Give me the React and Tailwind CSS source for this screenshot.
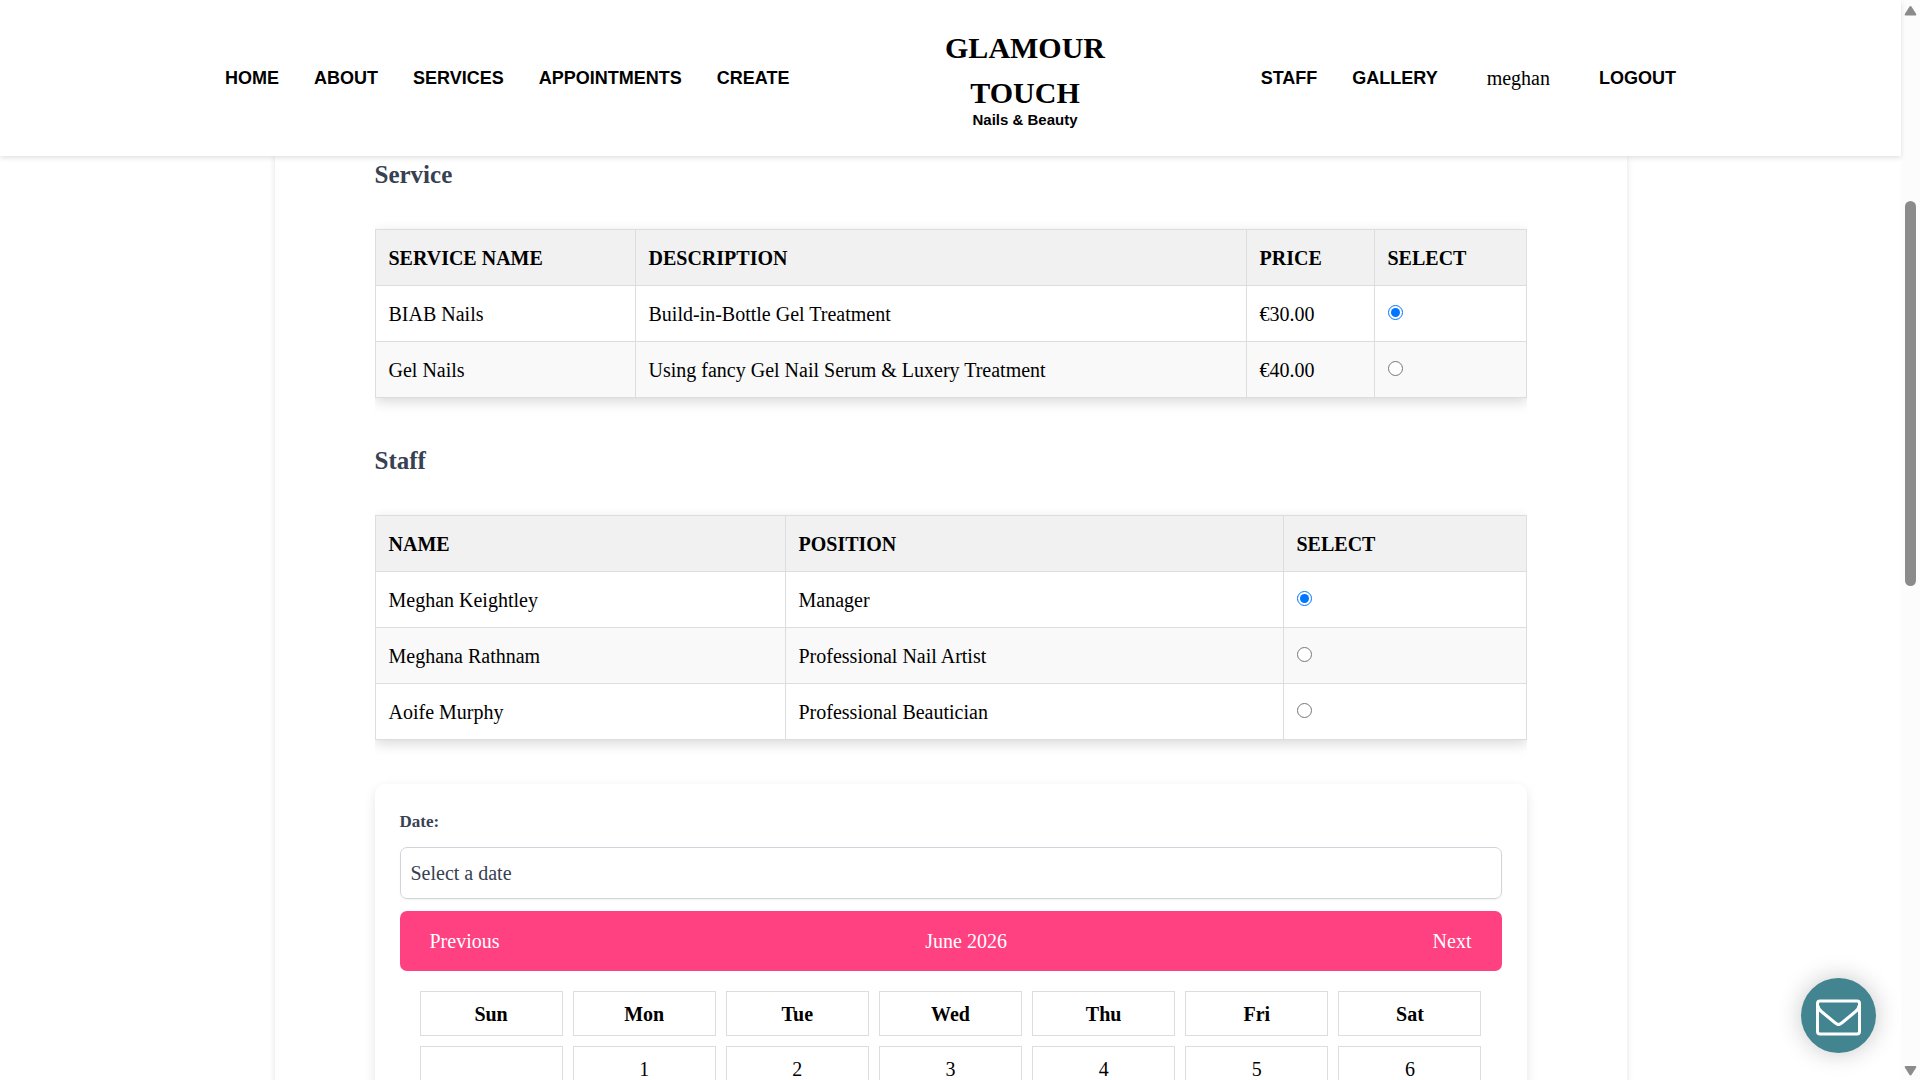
import { useState } from "react";

const leftLinks = ["Home", "About", "Services", "Appointments", "Create"];

const services = [
  { id: 1, name: "BIAB Nails", description: "Build-in-Bottle Gel Treatment", price: 30 },
  { id: 2, name: "Gel Nails", description: "Using fancy Gel Nail Serum & Luxery Treatment", price: 40 },
];

const staff = [
  { id: 1, name: "Meghan Keightley", position: "Manager" },
  { id: 2, name: "Meghana Rathnam", position: "Professional Nail Artist" },
  { id: 3, name: "Aoife Murphy", position: "Professional Beautician" },
];

const weekDays = ["Sun", "Mon", "Tue", "Wed", "Thu", "Fri", "Sat"];

const NavLink = ({ children }) => (
  <a href="#" className="font-['Liberation_Sans',sans-serif] text-[18px] font-bold uppercase hover:text-[#ff4081]">
    {children}
  </a>
);

const Header = () => (
  <header className="relative z-10 flex h-[156px] shrink-0 items-center justify-between bg-white px-[225px] shadow-[0_2px_5px_rgba(0,0,0,0.12)]">
    <nav className="flex items-center gap-[35px]">
      {leftLinks.map((link) => (
        <NavLink key={link}>{link}</NavLink>
      ))}
    </nav>

    <div className="w-[160px] pb-[5px] text-center font-bold">
      <h1 className="text-[30px] leading-[45px]">GLAMOUR TOUCH</h1>
      <p className="-mt-[3px] font-['Liberation_Sans',sans-serif] text-[15px] leading-[15px]">Nails &amp; Beauty</p>
    </div>

    <nav className="flex items-center gap-[35px]">
      <NavLink>Staff</NavLink>
      <NavLink>Gallery</NavLink>
      <span className="px-3.5 text-[20px]">meghan</span>
      <NavLink>Logout</NavLink>
    </nav>
  </header>
);

const Th = ({ children, className = "" }) => (
  <th className={`border border-[#ddd] px-[13px] text-left font-bold uppercase ${className}`}>{children}</th>
);

const Td = ({ children }) => <td className="border border-[#ddd] px-[13px]">{children}</td>;

const RadioCell = ({ group, label, checked, onChange }) => (
  <td className="border border-[#ddd] px-[13px]">
    <input
      type="radio"
      name={group}
      aria-label={label}
      checked={checked}
      onChange={onChange}
      className="mb-[3px] block size-[15px]"
    />
  </td>
);

const Section = ({ title, children }) => (
  <section>
    <h2 className="text-[25px] leading-[38px] font-bold text-[#374151]">{title}</h2>
    <div className="overflow-hidden pt-[35px] pb-11">
      <table className="w-full border-collapse bg-white shadow-[0_4px_12px_rgba(0,0,0,0.15)]">{children}</table>
    </div>
  </section>
);

const Calendar = () => {
  // June 2026 starts on a Monday
  const days = [null, ...Array.from({ length: 30 }, (_, i) => i + 1)];

  return (
    <div className="rounded-[10px] bg-white p-[25px] shadow-[0_4px_12px_rgba(0,0,0,0.1)]">
      <label htmlFor="date" className="block text-[17px] leading-[26px] font-bold text-[#374151]">
        Date:
      </label>
      <input
        id="date"
        type="text"
        readOnly
        placeholder="Select a date"
        className="mt-3 block h-[52px] w-full rounded-[7px] border border-[#d1d5db] px-2.5 text-[20px] shadow-xs outline-none placeholder:text-[#374151]"
      />
      <div className="mt-3 flex h-[60px] items-center justify-between rounded-[7px] bg-[#ff4081] px-[30px] text-white">
        <button type="button">Previous</button>
        <span>June 2026</span>
        <button type="button">Next</button>
      </div>
      <div className="grid grid-cols-7 gap-2.5 p-5 leading-5">
        {weekDays.map((day) => (
          <div key={day} className="flex h-[45px] items-center justify-center border border-[#ddd] font-bold">
            {day}
          </div>
        ))}
        {days.map((day, i) => (
          <button key={i} type="button" className="h-[45px] border border-[#ddd]">
            {day}
          </button>
        ))}
      </div>
    </div>
  );
};

const Scrollbar = () => (
  <div className="flex w-[19px] shrink-0 flex-col items-center bg-[#fcfcfc]">
    <svg className="mt-[5px]" width="13" height="11" viewBox="0 0 13 11" fill="#8b8b8b">
      <path d="M6.5 1Q7.2 1 7.6 1.7L12.2 9Q12.7 10.6 11.5 10.6H1.5Q.3 10.6 .8 9L5.4 1.7Q5.8 1 6.5 1Z" />
    </svg>
    <div className="mt-[185px] h-[385px] w-[11px] rounded-full bg-[#8b8b8b]"></div>
    <svg className="mt-auto mb-1" width="13" height="11" viewBox="0 0 13 11" fill="#8b8b8b">
      <path d="M6.5 10.5Q7.2 10.5 7.6 9.8L12.2 2.5Q12.7 .9 11.5 .9H1.5Q.3 .9 .8 2.5L5.4 9.8Q5.8 10.5 6.5 10.5Z" />
    </svg>
  </div>
);

const App = () => {
  const [service, setService] = useState(1);
  const [member, setMember] = useState(1);

  return (
    <div className="flex h-screen overflow-hidden bg-white font-['Liberation_Serif',serif] text-[20px] text-black">
      <div className="flex min-w-0 flex-1 flex-col">
        <Header />

        <main className="min-h-0 flex-1 overflow-y-auto [scrollbar-width:none]">
          <div className="mx-auto max-w-[1352px] px-[100px] shadow-[0_0_6px_rgba(0,0,0,0.12)]">
            <Section title="Service">
              <thead>
                <tr className="h-14 bg-[#f1f1f1]">
                  <Th className="w-[260px]">Service Name</Th>
                  <Th>Description</Th>
                  <Th className="w-[128px]">Price</Th>
                  <Th className="w-[152px]">Select</Th>
                </tr>
              </thead>
              <tbody>
                {services.map((item) => (
                  <tr key={item.id} className="h-14 even:bg-[#f9f9f9]">
                    <Td>{item.name}</Td>
                    <Td>{item.description}</Td>
                    <Td>€{item.price.toFixed(2)}</Td>
                    <RadioCell
                      group="service"
                      label={item.name}
                      checked={service === item.id}
                      onChange={() => setService(item.id)}
                    />
                  </tr>
                ))}
              </tbody>
            </Section>

            <Section title="Staff">
              <thead>
                <tr className="h-14 bg-[#f1f1f1]">
                  <Th className="w-[410px]">Name</Th>
                  <Th>Position</Th>
                  <Th className="w-[243px]">Select</Th>
                </tr>
              </thead>
              <tbody>
                {staff.map((person) => (
                  <tr key={person.id} className="h-14 even:bg-[#f9f9f9]">
                    <Td>{person.name}</Td>
                    <Td>{person.position}</Td>
                    <RadioCell
                      group="staff"
                      label={person.name}
                      checked={member === person.id}
                      onChange={() => setMember(person.id)}
                    />
                  </tr>
                ))}
              </tbody>
            </Section>

            <Calendar />
          </div>
        </main>
      </div>

      <Scrollbar />

      <button
        type="button"
        aria-label="Contact us"
        className="fixed right-11 bottom-[27px] z-20 flex size-[75px] items-center justify-center rounded-full bg-[#428591] pt-[3px] shadow-[0_0_25px_rgba(0,0,0,0.22)]"
      >
        <svg width="45" height="37" viewBox="0 0 45 37" fill="none" stroke="#fff" strokeWidth="3">
          <rect x="1.5" y="2" width="42" height="33" rx="2.5" />
          <path d="M2 6.500C2 9.500 4 11.500 6 13L17.500 22.500C20.500 25 21.500 25.500 22.500 25.500S24.500 25 27.500 22.500L39 13C41 11.500 43 9.500 43 6.500" />
        </svg>
      </button>
    </div>
  );
};

export default App;
